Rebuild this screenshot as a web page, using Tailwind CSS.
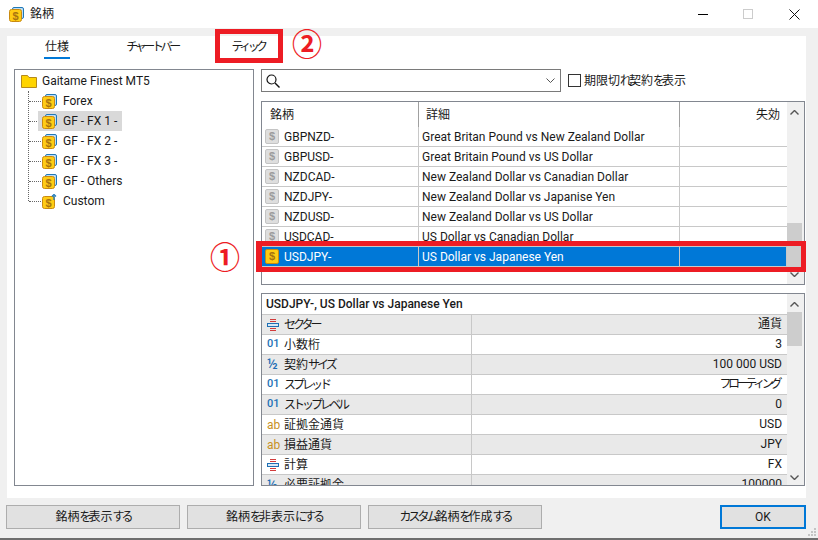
<!DOCTYPE html>
<html lang="ja">
<head>
  <meta charset="UTF-8">
  <title>銘柄</title>
  <script src="https://cdn.jsdelivr.net/npm/@tailwindcss/browser@4"></script>
</head>
<body class="relative w-[818px] h-[540px] overflow-hidden bg-[#f0f0f0] text-[12px] text-[#1a1a1a] font-['Roboto','Noto_Sans_CJK_JP',sans-serif]">

  <svg class="hidden">
    <symbol id="sym" viewBox="0 0 15 15">
      <rect x="3.5" y="0.5" width="11" height="11" rx="1.5" fill="#bcdcf3" stroke="#1e78b8"/>
      <rect x="0.5" y="2.5" width="12" height="12" rx="2" fill="#ffcc14" stroke="#c98a10"/>
      <text x="6.5" y="12.5" text-anchor="middle" font-size="11" font-weight="bold" font-family="Liberation Sans" fill="#a87410">$</text>
    </symbol>
    <symbol id="sym-add" viewBox="0 0 15 15">
      <rect x="0.5" y="2.5" width="12" height="12" rx="2" fill="#ffcc14" stroke="#c98a10"/>
      <text x="6.5" y="12.5" text-anchor="middle" font-size="11" font-weight="bold" font-family="Liberation Sans" fill="#a87410">$</text>
      <path d="M12 6V2M10 2.5l2-2 2 2" fill="none" stroke="#1e78b8" stroke-width="1.3"/>
    </symbol>
    <symbol id="sector" viewBox="0 0 12 12">
      <path d="M3 0.5h6M3 2.5h6M3 9.5h6M3 11.5h6" stroke="#d23c3c" fill="none"/>
      <rect x="0.5" y="4.5" width="11" height="3" fill="#dbe9f5" stroke="#1e6fb5"/>
    </symbol>
  </svg>

  <!-- title bar -->
  <header class="h-[28px] bg-white flex items-center pl-[9px] relative">
    <svg class="w-[15px] h-[15px]"><use href="#sym"/></svg>
    <span class="ml-[6px]">銘柄</span>
    <div class="ml-auto flex items-center pr-[18px]">
      <div class="w-[10px] h-[1px] bg-black"></div>
      <div class="w-[10px] h-[10px] border border-[#cccccc] ml-[35px]"></div>
      <svg class="w-[11px] h-[11px] ml-[36px]" viewBox="0 0 11 11"><path d="M0.5 0.5l10 10M10.5 0.5l-10 10" stroke="#111" fill="none"/></svg>
    </div>
  </header>

  <!-- main panel -->
  <main class="mt-[8px] mx-[7px] w-[799px] h-[462px] bg-white pt-[33px] pl-[7px] relative">
    <nav class="absolute top-0 left-0 h-[33px] flex">
      <div class="w-[100px] flex justify-center pt-[2px]"><span class="h-[21px] px-[1px] border-b-2 border-[#0078d7] leading-[18px]">仕様</span></div>
      <div class="w-[90px] flex justify-center pt-[2px] leading-[18px] tracking-[-3.4px]">チャートバー</div>
      <div class="w-[102px] flex justify-center pt-[2px] leading-[18px] tracking-[-3.6px]">ティック</div>
    </nav>

    <div class="flex gap-[7px] h-[417px]">
      <!-- tree -->
      <section class="w-[240px] shrink-0 border border-[#828790] bg-white relative pt-[1px]">
        <div class="absolute left-[13px] top-[21px] h-[110px] border-l border-dotted border-[#666]"></div>
        <div class="h-[20px] flex items-center pl-[6px]">
          <svg class="w-[16px] h-[13px]" viewBox="0 0 16 13"><path d="M0.5 12.5V0.5h6l1.5 2h7.5v10z" fill="#ffd400" stroke="#b58a1c"/></svg>
          <span class="ml-[5px]">Gaitame Finest MT5</span>
        </div>
        <div class="h-[20px] flex items-center pl-[14px]"><i class="w-[12px] border-t border-dotted border-[#666]"></i><svg class="w-[15px] h-[15px] ml-[1px]"><use href="#sym"/></svg><span class="ml-[6px]">Forex</span></div>
        <div class="h-[20px] flex items-center pl-[14px] relative"><div class="absolute left-[23px] w-[84px] h-[20px] bg-[#d9d9d9]"></div><i class="w-[12px] border-t border-dotted border-[#666]"></i><svg class="w-[15px] h-[15px] ml-[1px] relative"><use href="#sym"/></svg><span class="ml-[6px] relative">GF - FX 1 -</span></div>
        <div class="h-[20px] flex items-center pl-[14px]"><i class="w-[12px] border-t border-dotted border-[#666]"></i><svg class="w-[15px] h-[15px] ml-[1px]"><use href="#sym"/></svg><span class="ml-[6px]">GF - FX 2 -</span></div>
        <div class="h-[20px] flex items-center pl-[14px]"><i class="w-[12px] border-t border-dotted border-[#666]"></i><svg class="w-[15px] h-[15px] ml-[1px]"><use href="#sym"/></svg><span class="ml-[6px]">GF - FX 3 -</span></div>
        <div class="h-[20px] flex items-center pl-[14px]"><i class="w-[12px] border-t border-dotted border-[#666]"></i><svg class="w-[15px] h-[15px] ml-[1px]"><use href="#sym"/></svg><span class="ml-[6px]">GF - Others</span></div>
        <div class="h-[20px] flex items-center pl-[14px]"><i class="w-[12px] border-t border-dotted border-[#666]"></i><svg class="w-[15px] h-[15px] ml-[1px]"><use href="#sym-add"/></svg><span class="ml-[6px]">Custom</span></div>
      </section>

      <section class="w-[544px] shrink-0 flex flex-col">
        <!-- search -->
        <div class="flex items-center h-[23px]">
          <div class="w-[300px] h-[23px] border border-[#7a7a7a] flex items-center justify-between pl-[4px] pr-[5px]">
            <svg class="w-[14px] h-[14px]" viewBox="0 0 14 14"><circle cx="5.5" cy="5.5" r="4.5" fill="none" stroke="#111" stroke-width="1.2"/><path d="M9 9l4.5 4.5" stroke="#111" stroke-width="1.4"/></svg>
            <svg class="w-[9px] h-[5px]" viewBox="0 0 9 5"><path d="M0.5 0.5l4 4 4-4" fill="none" stroke="#555"/></svg>
          </div>
          <div class="w-[13px] h-[13px] border border-[#333] ml-[7px]"></div>
          <span class="ml-[3px]">期限切<span class="tracking-[-3px]">れ</span>契約<span class="tracking-[-3px]">を</span>表示</span>
        </div>

        <!-- symbols table -->
        <div class="mt-[9px] h-[184px] border border-[#828790] flex overflow-hidden">
          <div class="w-[525px] flex flex-col">
            <div class="h-[25px] flex shrink-0 items-center">
              <div class="w-[157px] h-full pl-[8px] flex items-center border-r border-[#a0a0a0]">銘柄</div>
              <div class="w-[261px] h-full pl-[7px] flex items-center border-r border-[#a0a0a0]">詳細</div>
              <div class="flex-1 text-right pr-[7px]">失効</div>
            </div>
            <div class="flex h-[20px] shrink-0 border-b border-[#c8c8c8]"><div class="w-[157px] flex items-center pl-[3px] border-r border-[#c8c8c8]"><span class="w-[14px] h-[15px] rounded-[2px] bg-[#dedede] border border-[#c4c4c4] text-[#9c9c9c] flex items-center justify-center text-[11px] font-bold font-['Liberation_Sans']">$</span><span class="ml-[5px]">GBPNZD-</span></div><div class="w-[261px] flex items-center pl-[3px] border-r border-[#c8c8c8]">Great Britan Pound vs New Zealand Dollar</div></div>
            <div class="flex h-[20px] shrink-0 border-b border-[#c8c8c8]"><div class="w-[157px] flex items-center pl-[3px] border-r border-[#c8c8c8]"><span class="w-[14px] h-[15px] rounded-[2px] bg-[#dedede] border border-[#c4c4c4] text-[#9c9c9c] flex items-center justify-center text-[11px] font-bold font-['Liberation_Sans']">$</span><span class="ml-[5px]">GBPUSD-</span></div><div class="w-[261px] flex items-center pl-[3px] border-r border-[#c8c8c8]">Great Britain Pound vs US Dollar</div></div>
            <div class="flex h-[20px] shrink-0 border-b border-[#c8c8c8]"><div class="w-[157px] flex items-center pl-[3px] border-r border-[#c8c8c8]"><span class="w-[14px] h-[15px] rounded-[2px] bg-[#dedede] border border-[#c4c4c4] text-[#9c9c9c] flex items-center justify-center text-[11px] font-bold font-['Liberation_Sans']">$</span><span class="ml-[5px]">NZDCAD-</span></div><div class="w-[261px] flex items-center pl-[3px] border-r border-[#c8c8c8]">New Zealand Dollar vs Canadian Dollar</div></div>
            <div class="flex h-[20px] shrink-0 border-b border-[#c8c8c8]"><div class="w-[157px] flex items-center pl-[3px] border-r border-[#c8c8c8]"><span class="w-[14px] h-[15px] rounded-[2px] bg-[#dedede] border border-[#c4c4c4] text-[#9c9c9c] flex items-center justify-center text-[11px] font-bold font-['Liberation_Sans']">$</span><span class="ml-[5px]">NZDJPY-</span></div><div class="w-[261px] flex items-center pl-[3px] border-r border-[#c8c8c8]">New Zealand Dollar vs Japanise Yen</div></div>
            <div class="flex h-[20px] shrink-0 border-b border-[#c8c8c8]"><div class="w-[157px] flex items-center pl-[3px] border-r border-[#c8c8c8]"><span class="w-[14px] h-[15px] rounded-[2px] bg-[#dedede] border border-[#c4c4c4] text-[#9c9c9c] flex items-center justify-center text-[11px] font-bold font-['Liberation_Sans']">$</span><span class="ml-[5px]">NZDUSD-</span></div><div class="w-[261px] flex items-center pl-[3px] border-r border-[#c8c8c8]">New Zealand Dollar vs US Dollar</div></div>
            <div class="flex h-[20px] shrink-0 border-b border-[#c8c8c8]"><div class="w-[157px] flex items-center pl-[3px] border-r border-[#c8c8c8]"><span class="w-[14px] h-[15px] rounded-[2px] bg-[#dedede] border border-[#c4c4c4] text-[#9c9c9c] flex items-center justify-center text-[11px] font-bold font-['Liberation_Sans']">$</span><span class="ml-[5px]">USDCAD-</span></div><div class="w-[261px] flex items-center pl-[3px] border-r border-[#c8c8c8]">US Dollar vs Canadian Dollar</div></div>
            <div class="flex h-[20px] shrink-0 bg-[#0078d7] text-white border-b border-r border-[#c8c8c8]"><div class="w-[157px] flex items-center pl-[3px] border-r border-[#c8c8c8]"><span class="w-[14px] h-[15px] rounded-[2px] bg-[#ffcc14] border border-[#c98a10] text-[#a87410] flex items-center justify-center text-[11px] font-bold font-['Liberation_Sans']">$</span><span class="ml-[5px]">USDJPY-</span></div><div class="w-[261px] flex items-center pl-[3px] border-r border-[#c8c8c8]">US Dollar vs Japanese Yen</div></div>
          </div>
          <!-- scrollbar -->
          <div class="flex-1 bg-[#f0f0f0] flex flex-col items-center pr-[2px]">
            <svg class="w-[9px] h-[5px] mt-[8px]" viewBox="0 0 9 5"><path d="M0.5 4.5l4-4 4 4" fill="none" stroke="#555" stroke-width="1.4"/></svg>
            <div class="w-[15px] h-[44px] bg-[#cdcdcd] mt-[108px]"></div>
            <svg class="w-[9px] h-[5px] mt-[5px]" viewBox="0 0 9 5"><path d="M0.5 0.5l4 4 4-4" fill="none" stroke="#555" stroke-width="1.4"/></svg>
          </div>
        </div>

        <!-- details -->
        <div class="mt-[8px] h-[193px] border border-[#828790] flex overflow-hidden">
          <div class="w-[525px] flex flex-col">
            <div class="h-[21px] shrink-0 pl-[4px] flex items-center font-medium border-b border-[#c8c8c8]">USDJPY-, US Dollar vs Japanese Yen</div>
            <div class="flex h-[20px] shrink-0 bg-[#e9e9e9] border-b border-[#c8c8c8]"><div class="w-[210px] flex items-center border-r border-[#c8c8c8]"><svg class="w-[12px] h-[12px] ml-[5px] mr-[5px]"><use href="#sector"/></svg><span class="tracking-[-3px]">セクター</span></div><div class="flex-1 text-right pr-[5px] leading-[19px]">通貨</div></div>
            <div class="flex h-[20px] shrink-0 border-b border-[#c8c8c8]"><div class="w-[210px] flex items-center border-r border-[#c8c8c8]"><span class="w-[22px] pl-[5px] text-[11px] font-medium text-[#1e6fb5]">01</span>小数桁</div><div class="flex-1 text-right pr-[5px] leading-[19px]">3</div></div>
            <div class="flex h-[20px] shrink-0 bg-[#e9e9e9] border-b border-[#c8c8c8]"><div class="w-[210px] flex items-center border-r border-[#c8c8c8]"><span class="w-[22px] pl-[5px] text-[14px] font-medium text-[#1e6fb5]">½</span>契約<span class="tracking-[-3px]">サイズ</span></div><div class="flex-1 text-right pr-[5px] leading-[19px]">100 000 USD</div></div>
            <div class="flex h-[20px] shrink-0 border-b border-[#c8c8c8]"><div class="w-[210px] flex items-center border-r border-[#c8c8c8]"><span class="w-[22px] pl-[5px] text-[11px] font-medium text-[#1e6fb5]">01</span><span class="tracking-[-3px]">スプレッド</span></div><div class="flex-1 text-right pr-[8px] leading-[19px] tracking-[-3.4px]">フローティング</div></div>
            <div class="flex h-[20px] shrink-0 bg-[#e9e9e9] border-b border-[#c8c8c8]"><div class="w-[210px] flex items-center border-r border-[#c8c8c8]"><span class="w-[22px] pl-[5px] text-[11px] font-medium text-[#1e6fb5]">01</span><span class="tracking-[-3px]">ストップレベル</span></div><div class="flex-1 text-right pr-[5px] leading-[19px]">0</div></div>
            <div class="flex h-[20px] shrink-0 border-b border-[#c8c8c8]"><div class="w-[210px] flex items-center border-r border-[#c8c8c8]"><span class="w-[22px] pl-[5px] text-[#c8901e]">ab</span>証拠金通貨</div><div class="flex-1 text-right pr-[5px] leading-[19px]">USD</div></div>
            <div class="flex h-[20px] shrink-0 bg-[#e9e9e9] border-b border-[#c8c8c8]"><div class="w-[210px] flex items-center border-r border-[#c8c8c8]"><span class="w-[22px] pl-[5px] text-[#c8901e]">ab</span>損益通貨</div><div class="flex-1 text-right pr-[5px] leading-[19px]">JPY</div></div>
            <div class="flex h-[20px] shrink-0 border-b border-[#c8c8c8]"><div class="w-[210px] flex items-center border-r border-[#c8c8c8]"><svg class="w-[12px] h-[12px] ml-[5px] mr-[5px]"><use href="#sector"/></svg>計算</div><div class="flex-1 text-right pr-[5px] leading-[19px]">FX</div></div>
            <div class="flex h-[20px] shrink-0 bg-[#e9e9e9]"><div class="w-[210px] flex items-center border-r border-[#c8c8c8]"><span class="w-[22px] pl-[5px] text-[14px] font-medium text-[#1e6fb5]">½</span>必要証拠金</div><div class="flex-1 text-right pr-[5px] leading-[19px]">100000</div></div>
          </div>
          <div class="flex-1 bg-[#f0f0f0] flex flex-col items-center pr-[2px]">
            <svg class="w-[9px] h-[5px] mt-[8px]" viewBox="0 0 9 5"><path d="M0.5 4.5l4-4 4 4" fill="none" stroke="#555" stroke-width="1.4"/></svg>
            <div class="w-[15px] h-[34px] bg-[#cdcdcd] mt-[5px]"></div>
            <svg class="w-[9px] h-[5px] mt-[129px]" viewBox="0 0 9 5"><path d="M0.5 0.5l4 4 4-4" fill="none" stroke="#555" stroke-width="1.4"/></svg>
          </div>
        </div>
      </section>
    </div>
  </main>

  <!-- footer buttons -->
  <footer class="mt-[7px] px-[6px] flex gap-[7px] h-[24px]">
    <button class="w-[174px] h-[24px] bg-[#e1e1e1] border border-[#adadad]">銘柄<span class="tracking-[-3px]">を</span>表示<span class="tracking-[-3px]">する</span></button>
    <button class="w-[174px] h-[24px] bg-[#e1e1e1] border border-[#adadad]">銘柄<span class="tracking-[-3px]">を</span>非表示<span class="tracking-[-3px]">にする</span></button>
    <button class="w-[174px] h-[24px] bg-[#e1e1e1] border border-[#adadad]"><span class="tracking-[-3px]">カスタム</span>銘柄<span class="tracking-[-3px]">を</span>作成<span class="tracking-[-3px]">する</span></button>
    <button class="w-[86px] h-[24px] ml-auto mr-[6px] bg-[#e1e1e1] border-2 border-[#0078d7]">OK</button>
  </footer>
  <div class="absolute left-0 right-0 bottom-0 h-[2px] bg-[#6e6e6e]"></div>
  <svg class="absolute left-[808px] top-[528px] w-[9px] h-[9px]" viewBox="0 0 9 9"><path d="M6 0h2v2H6zM3 3h2v2H3zM6 3h2v2H6zM0 6h2v2H0zM3 6h2v2H3zM6 6h2v2H6z" fill="#c4c4c4"/></svg>

  <!-- annotations -->
  <div class="absolute left-[215px] top-[29px] w-[68px] h-[34px] border-[5px] border-[#ed1c24]"></div>
  <div class="absolute left-[256px] top-[241px] w-[550px] h-[31px] border-[5px] border-l-[6px] border-[#ed1c24]"></div>
  <div class="absolute left-[291px] top-[24px] w-[32px] h-[36px] flex items-center justify-center text-[30px] font-bold text-[#ed1c24] font-['Noto_Sans_CJK_JP',sans-serif]">②</div>
  <div class="absolute left-[209px] top-[237px] w-[32px] h-[36px] flex items-center justify-center text-[30px] font-bold text-[#ed1c24] font-['Noto_Sans_CJK_JP',sans-serif]">①</div>
</body>
</html>
